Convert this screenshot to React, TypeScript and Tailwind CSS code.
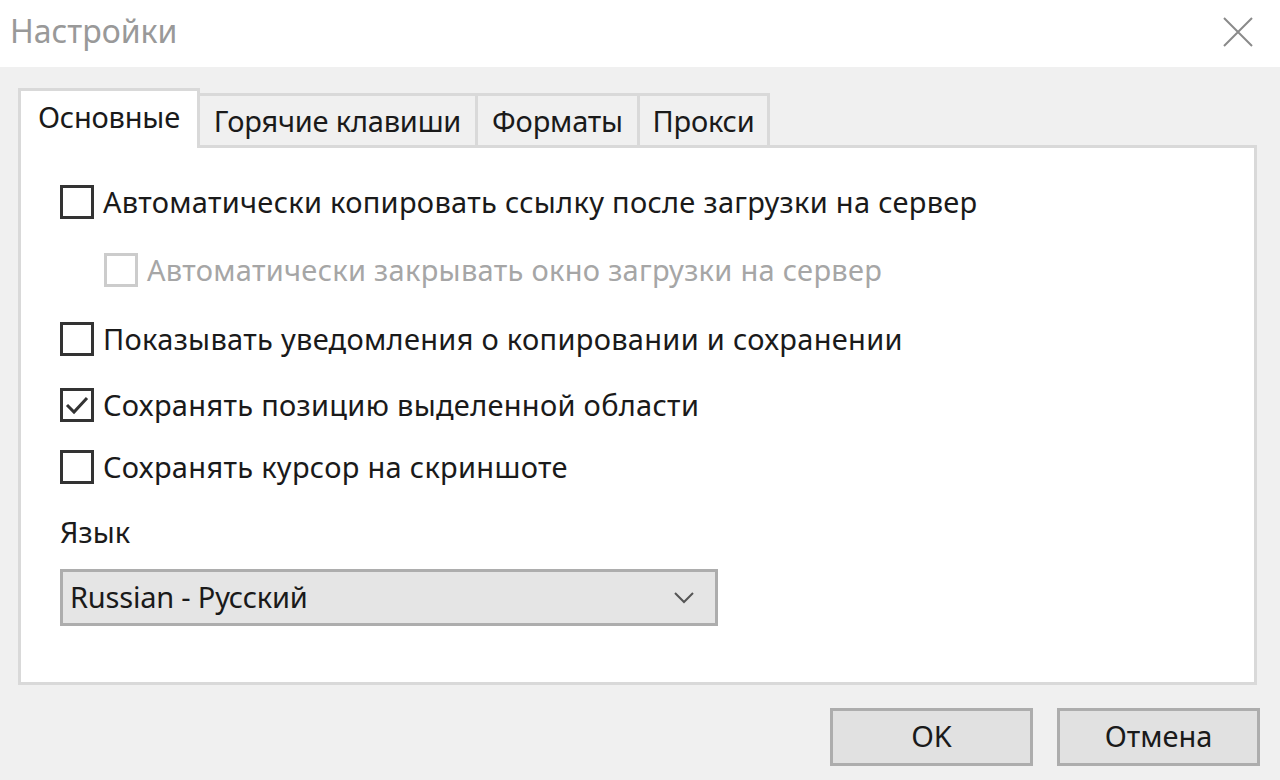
import React from "react";

const font = { fontFamily: '"Noto Sans", "Open Sans", sans-serif' };

function Box({ checked, disabled }: { checked?: boolean; disabled?: boolean }) {
  return (
    <div
      className={
        "w-[34px] h-[34px] shrink-0 border-[3px] bg-white flex items-center justify-center " +
        (disabled ? "border-[#cccccc]" : "border-[#333333]")
      }
    >
      {checked && (
        <svg width="26" height="22" viewBox="0 0 26 22" fill="none">
          <path d="M3 11 L10 18 L23 4" stroke="#333" strokeWidth="3" />
        </svg>
      )}
    </div>
  );
}

function Option({
  label,
  checked,
  disabled,
  className,
}: {
  label: string;
  checked?: boolean;
  disabled?: boolean;
  className?: string;
}) {
  return (
    <div className={"flex items-center h-[34px] gap-[9px] " + (className ?? "")}>
      <Box checked={checked} disabled={disabled} />
      <span
        className={
          "text-[29px] leading-none whitespace-nowrap tracking-[0.3px] -mt-[2px] " +
          (disabled ? "text-[#a6a6a6]" : "text-[#1a1a1a]")
        }
      >
        {label}
      </span>
    </div>
  );
}

const tabs = ["Основные", "Горячие клавиши", "Форматы", "Прокси"];
const tabWidths = ["w-[182px]", "w-[278px]", "w-[162px]", "w-[130px]"];

export default function App() {
  return (
    <div className="w-[1280px] h-[780px] bg-[#f0f0f0] flex flex-col overflow-hidden" style={font}>
      {/* title bar */}
      <div className="h-[67px] bg-white flex items-center justify-between pl-[10px] pr-[26px] shrink-0">
        <span className="text-[32px] text-[#999999] leading-none -mt-[6px]">Настройки</span>
        <svg width="32" height="32" viewBox="0 0 32 32" className="-mt-[4px]">
          <path d="M2 2 L30 30 M30 2 L2 30" stroke="#8a8a8a" strokeWidth="2" />
        </svg>
      </div>

      <div className="flex-1 pl-[18px] pr-[20px] pt-[21px] flex flex-col">
        {/* tab strip */}
        <div className="flex items-end h-[57px] w-[1239px]">
          {tabs.map((t, i) =>
            i === 0 ? (
              <div
                key={t}
                className={
                  tabWidths[i] +
                  " h-[60px] -mb-[3px] relative z-10 bg-white border-[3px] border-b-0 border-[#d9d9d9] flex items-center pl-[17px] text-[29px] text-[#1a1a1a] leading-none tracking-[-0.2px]"
                }
              >
                <span className="-mt-[6px]">{t}</span>
              </div>
            ) : (
              <div
                key={t}
                className={
                  tabWidths[i] +
                  " h-[52px] bg-[#f0f0f0] border-t-[3px] border-r-[3px] border-[#d9d9d9] flex items-center justify-center text-[29px] text-[#1a1a1a] leading-none tracking-[-0.2px] whitespace-nowrap"
                }
              >
                <span className="mt-[0px]">{t}</span>
              </div>
            )
          )}
        </div>

        {/* panel */}
        <div className="w-[1239px] h-[540px] bg-white border-[3px] border-[#d9d9d9] pl-[39px] pt-[37px] flex flex-col">
          <Option label="Автоматически копировать ссылку после загрузки на сервер" />
          <Option
            label="Автоматически закрывать окно загрузки на сервер"
            disabled
            className="mt-[34px] pl-[44px]"
          />
          <Option label="Показывать уведомления о копировании и сохранении" className="mt-[35px]" />
          <Option label="Сохранять позицию выделенной области" checked className="mt-[32px]" />
          <Option label="Сохранять курсор на скриншоте" className="mt-[28px]" />

          <div className="mt-[33px] text-[29px] text-[#1a1a1a] leading-none">Язык</div>

          <div className="mt-[23px] w-[658px] h-[57px] bg-[#e5e5e5] border-[3px] border-[#adadad] flex items-center justify-between pl-[7px] pr-[20px]">
            <span className="text-[29px] text-[#1a1a1a] leading-none tracking-[-0.2px] -mt-[3px]">
              Russian - Русский
            </span>
            <svg width="22" height="14" viewBox="0 0 22 14" fill="none">
              <path d="M2 2 L11 11 L20 2" stroke="#555" strokeWidth="2" />
            </svg>
          </div>
        </div>

        {/* buttons */}
        <div className="flex justify-end gap-[24px] mt-[23px]">
          {["OK", "Отмена"].map((b) => (
            <div
              key={b}
              className="w-[203px] h-[58px] bg-[#e1e1e1] border-[3px] border-[#adadad] flex items-center justify-center text-[29px] text-[#1a1a1a] leading-none"
            >
              <span className="-mt-[3px]">{b}</span>
            </div>
          ))}
        </div>
      </div>
    </div>
  );
}
